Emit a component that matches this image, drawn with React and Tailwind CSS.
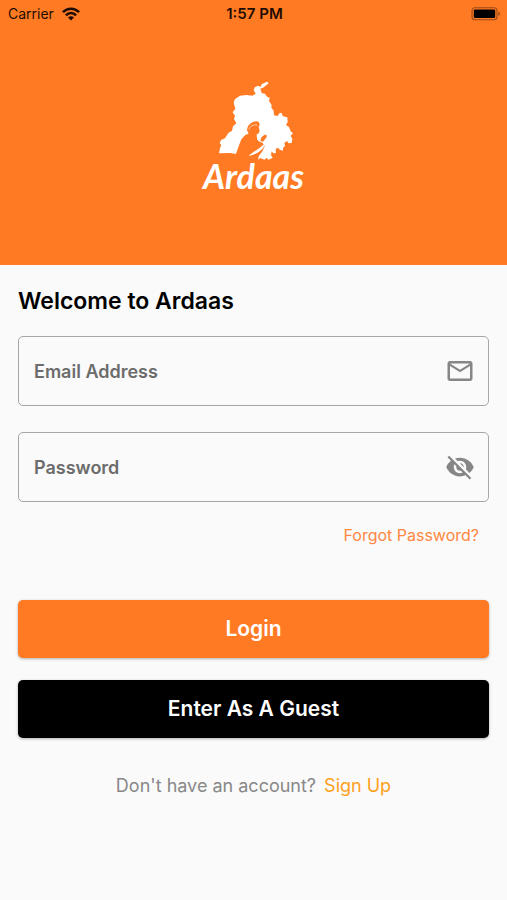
import React, { useState } from "react";
import { MdOutlineEmail, MdVisibilityOff } from "react-icons/md";

function WifiIcon() {
  return (
    <svg viewBox="0 0 18 14" className="h-3.5 w-[18px]" aria-hidden="true">
      <g fill="none" stroke="#1f0d02" strokeWidth="2.6">
        <path d="M0.9 5.2C5.5 0.5 12.5 0.5 17.1 5.2" />
        <path d="M3.9 8.3C6.8 5.3 11.2 5.3 14.1 8.3" />
      </g>
      <path d="M6 10.4C7.7 8.8 10.3 8.8 12 10.4L9 13.5Z" fill="#1f0d02" />
    </svg>
  );
}

function BatteryIcon() {
  return (
    <svg viewBox="0 0 30 14" className="h-3.5 w-[30px]" aria-hidden="true">
      <rect x="1" y="0.8" width="25" height="12" rx="3" fill="none" stroke="#9c4a18" strokeWidth="1.1" />
      <rect x="2.8" y="2.6" width="21.4" height="8.4" rx="1.2" fill="#000" />
      <path d="M27.4 4.8C29.5 5.4 29.5 8.2 27.4 8.8Z" fill="#9c4a18" />
    </svg>
  );
}

function MapMark() {
  return (
    <svg viewBox="66 30 249 246" className="h-[82px] w-[83px]" aria-hidden="true">
      <path
        fill="#fff"
        d="M231 35L236 40L219 53L211 56L215 69L225 71L231 80L239 83L237 93L245 105L244 113L251 122L252 136L263 138L268 130L274 128L279 139L292 142L293 156L288 165L297 171L302 184L309 190L302 197L307 207L305 219L296 220L291 213L283 219L285 229L279 233L279 242L269 239L264 233L257 237L258 249L250 250L245 244L243 256L248 263L236 269L230 264L223 269L211 264L204 269L207 255L190 240L150 240L138 252L121 249L87 250L90 235L94 225L89 220L93 210L105 205L115 189L126 182L129 169L139 160L132 147L135 137L128 127L136 116L131 98L135 87L150 77L170 75L187 77L197 71L191 60L195 51L205 47L211 51L216 42Z"
      />
      <path
        fill="#ff7a23"
        d="M171 181C172 166 184 155 199 154C210 155 211 164 206 171L209 183L205 191L200 193L201 207L206 214L218 219L224 228L218 243L207 257L175 260L137 254L146 229L154 208L166 195L176 191Z"
      />
      <path fill="#ff7a23" d="M211 213L214 202L224 194C231 193 232 199 228 204L219 215Z" />
      <path fill="none" stroke="#fff" strokeWidth="1.8" d="M177 179C179 168 190 163 202 165" />
      <path fill="#fff" d="M176 258C185 247 204 240 218 226L224 222C222 239 201 253 176 258Z" />
    </svg>
  );
}

function Field({ id, label, type, children }) {
  return (
    <div className="flex h-[70px] items-center rounded-[5px] border border-[#a6a6a6] pr-[13px]">
      <input
        id={id}
        type={type}
        aria-label={label}
        placeholder={label}
        className="h-full min-w-0 flex-1 bg-transparent pl-[15px] text-lg font-semibold text-black outline-none placeholder:text-[#6c6c6c]"
      />
      {children}
    </div>
  );
}

export default function App() {
  const [visible, setVisible] = useState(false);
  return (
    <div className="min-h-screen bg-[#fafafa] font-['Inter','Liberation_Sans',sans-serif]">
      <header className="bg-[#ff7a23] pb-[75px]">
        <div className="grid h-7 grid-cols-3 items-center pr-1.5 pl-2 text-[#1f0d02]">
          <div className="flex items-center gap-2 text-sm">
            <span>Carrier</span>
            <WifiIcon />
          </div>
          <div className="text-center text-[15px] font-semibold">1:57 PM</div>
          <div className="flex justify-end">
            <BatteryIcon />
          </div>
        </div>
        <div className="flex flex-col items-center pt-[52px]">
          <MapMark />
          <span className="font-['Lato',sans-serif] text-[34px] leading-7 font-bold text-white italic">Ardaas</span>
        </div>
      </header>
      <main className="px-[18px] pt-5">
        <h1 className="text-[23px] leading-8 font-semibold text-black">Welcome to Ardaas</h1>
        <form className="pt-[19px]" onSubmit={(e) => e.preventDefault()}>
          <div className="flex flex-col gap-[26px]">
            <Field id="email" label="Email Address" type="email">
              <MdOutlineEmail className="size-[30px] text-[#868686]" aria-hidden="true" />
            </Field>
            <Field id="password" label="Password" type={visible ? "text" : "password"}>
              <button type="button" aria-label="Show password" onClick={() => setVisible(!visible)}>
                <MdVisibilityOff className="size-[30px] text-[#868686]" />
              </button>
            </Field>
          </div>
          <div className="flex justify-end pt-[21px] pr-2.5">
            <a href="#forgot" className="text-base leading-6 text-[#ff8740]">Forgot Password?</a>
          </div>
          <div className="flex flex-col gap-[22px] pt-[53px]">
            <button type="submit" className="h-[58px] rounded-[5px] bg-[#ff7a23] text-[21px] font-semibold text-white shadow-[0_1px_3px_rgba(0,0,0,0.3)]">
              Login
            </button>
            <button type="button" className="h-[58px] rounded-[5px] bg-black text-[21px] font-semibold text-white shadow-[0_1px_3px_rgba(0,0,0,0.3)]">
              Enter As A Guest
            </button>
          </div>
        </form>
        <p className="flex justify-center gap-2 pt-[34px] text-lg leading-7 text-[#888888]">
          <span>Don't have an account?</span>
          <a href="#signup" className="text-[#ffa01c]">Sign Up</a>
        </p>
      </main>
    </div>
  );
}
